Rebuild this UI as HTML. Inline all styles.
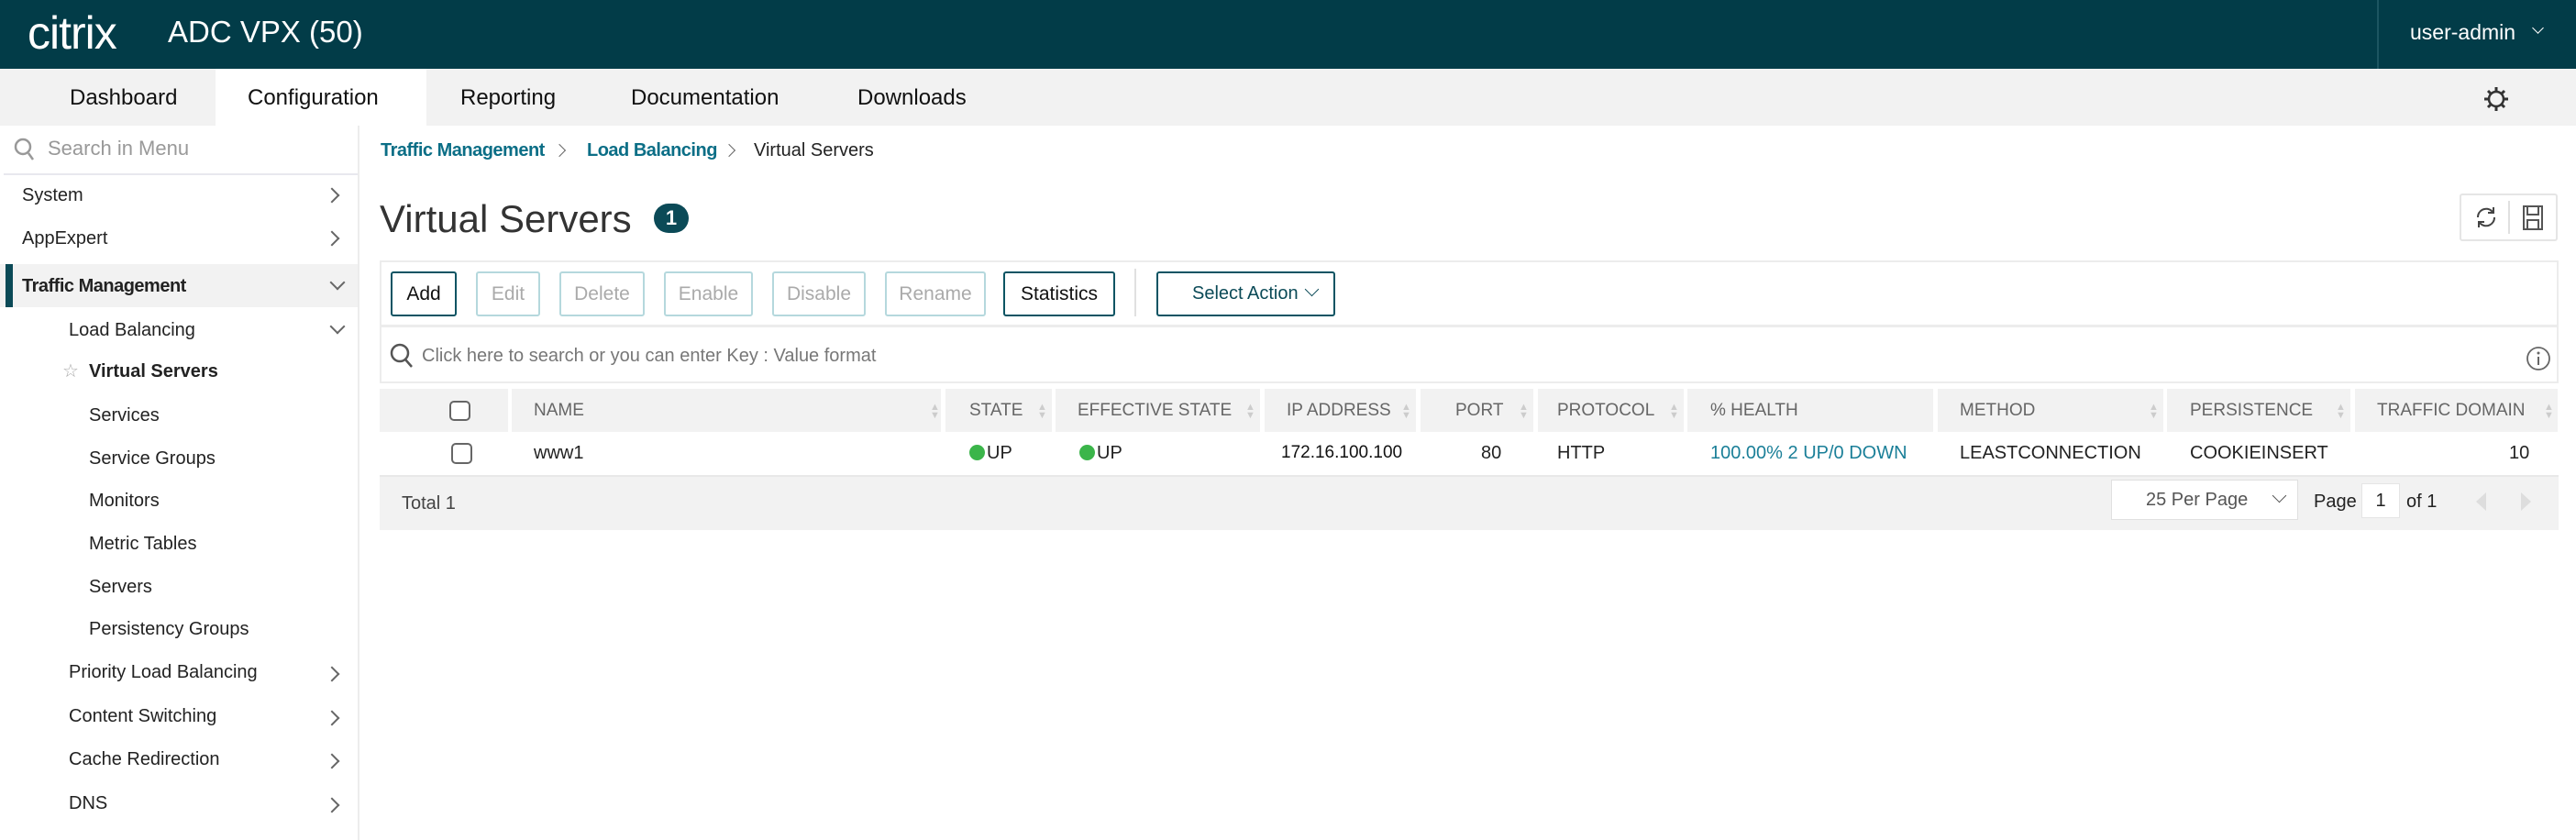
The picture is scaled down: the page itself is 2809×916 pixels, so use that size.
<!DOCTYPE html>
<html><head><meta charset="utf-8">
<style>
*{margin:0;padding:0;box-sizing:border-box}
body{width:2809px;height:916px;position:relative;overflow:hidden;background:#fff;font-family:"Liberation Sans",sans-serif;color:#222}
.a{position:absolute;white-space:nowrap}
.t{position:absolute;white-space:nowrap;font-size:20px;line-height:24px}
.chev{position:absolute;width:12px;height:12px;border-right:2px solid #666;border-bottom:2px solid #666}
.btn{position:absolute;top:296px;height:49px;border:2px solid #b5d8dd;border-radius:3px;color:#aaa;font-size:21px;line-height:45px;text-align:center}
.btn.on{border-color:#0c5463;color:#111}
.th{position:absolute;top:424px;height:47px;background:#f2f2f2;font-size:19px;line-height:47px;color:#666;padding-left:0}
.td{position:absolute;top:482px;font-size:20px;line-height:24px;color:#222}
.dot{display:inline-block;width:17px;height:17px;border-radius:50%;background:#3bb54a;vertical-align:-2px;margin-right:2px}
</style></head><body>
<!-- header -->
<div class="a" style="left:0;top:0;width:2809px;height:75px;background:#023c48"></div>
<div class="a" style="left:30px;top:8px;font-size:50px;line-height:56px;color:#fff;font-weight:300;letter-spacing:-1px">citrix</div>
<div class="a" style="left:183px;top:15px;font-size:33px;line-height:40px;color:#fff">ADC VPX (50)</div>
<div class="a" style="left:2592px;top:0;width:2px;height:75px;background:#1c5561"></div>
<div class="a" style="left:2628px;top:21px;font-size:23px;line-height:28px;color:#fff">user-admin</div>
<div class="chev" style="left:2763px;top:26px;width:9px;height:9px;border-color:#fff;border-width:0 1.5px 1.5px 0;transform:rotate(45deg)"></div>
<!-- nav -->
<div class="a" style="left:0;top:75px;width:2809px;height:62px;background:#f2f2f2"></div>
<div class="a" style="left:235px;top:75px;width:230px;height:63px;background:#fff"></div>
<div class="a" style="left:76px;top:93px;font-size:24px;line-height:28px;color:#111">Dashboard</div>
<div class="a" style="left:270px;top:93px;font-size:24px;line-height:28px;color:#111">Configuration</div>
<div class="a" style="left:502px;top:93px;font-size:24px;line-height:28px;color:#111">Reporting</div>
<div class="a" style="left:688px;top:93px;font-size:24px;line-height:28px;color:#111">Documentation</div>
<div class="a" style="left:935px;top:93px;font-size:24px;line-height:28px;color:#111">Downloads</div>
<svg class="a" style="left:2706px;top:92px" width="32" height="32" viewBox="0 0 32 32"><circle cx="16" cy="16" r="8" fill="none" stroke="#333" stroke-width="2.5"/><g stroke="#333" stroke-width="3"><line x1="16" y1="3" x2="16" y2="8"/><line x1="16" y1="24" x2="16" y2="29"/><line x1="3" y1="16" x2="8" y2="16"/><line x1="24" y1="16" x2="29" y2="16"/><line x1="7" y1="7" x2="10" y2="10"/><line x1="22" y1="22" x2="25" y2="25"/><line x1="7" y1="25" x2="10" y2="22"/><line x1="22" y1="10" x2="25" y2="7"/></g></svg>
<!-- sidebar -->
<div class="a" style="left:390px;top:137px;width:2px;height:779px;background:#ececec"></div>
<div class="a" style="left:4px;top:189px;width:386px;height:2px;background:#e8e8ee"></div>
<svg class="a" style="left:14px;top:149px" width="26" height="28" viewBox="0 0 26 28"><circle cx="11" cy="11" r="8" fill="none" stroke="#999" stroke-width="2.5"/><line x1="17" y1="18" x2="22" y2="25" stroke="#999" stroke-width="2.5"/></svg>
<div class="t" style="left:52px;top:150px;font-size:22px;color:#999">Search in Menu</div>
<div class="t" style="left:24px;top:201px;color:#222">System</div>
<div class="chev" style="left:356px;top:207px;transform:rotate(-45deg)"></div>
<div class="t" style="left:24px;top:248px;color:#222">AppExpert</div>
<div class="chev" style="left:356px;top:254px;transform:rotate(-45deg)"></div>
<div class="a" style="left:0;top:288px;width:390px;height:47px;background:#f2f2f2"></div>
<div class="a" style="left:6px;top:288px;width:8px;height:47px;background:#0b4a57"></div>
<div class="t" style="left:24px;top:300px;font-weight:bold;letter-spacing:-0.5px">Traffic Management</div>
<div class="chev" style="left:362px;top:302px;transform:rotate(45deg)"></div>
<div class="t" style="left:75px;top:348px">Load Balancing</div>
<div class="chev" style="left:362px;top:350px;transform:rotate(45deg)"></div>
<div class="a" style="left:68px;top:392px;font-size:20px;color:#aaa">☆</div>
<div class="t" style="left:97px;top:393px;font-weight:bold">Virtual Servers</div>
<div class="t" style="left:97px;top:441px">Services</div>
<div class="t" style="left:97px;top:488px">Service Groups</div>
<div class="t" style="left:97px;top:534px">Monitors</div>
<div class="t" style="left:97px;top:581px">Metric Tables</div>
<div class="t" style="left:97px;top:628px">Servers</div>
<div class="t" style="left:97px;top:674px">Persistency Groups</div>
<div class="t" style="left:75px;top:721px">Priority Load Balancing</div>
<div class="chev" style="left:356px;top:729px;transform:rotate(-45deg)"></div>
<div class="t" style="left:75px;top:769px">Content Switching</div>
<div class="chev" style="left:356px;top:777px;transform:rotate(-45deg)"></div>
<div class="t" style="left:75px;top:816px">Cache Redirection</div>
<div class="chev" style="left:356px;top:824px;transform:rotate(-45deg)"></div>
<div class="t" style="left:75px;top:864px">DNS</div>
<div class="chev" style="left:356px;top:872px;transform:rotate(-45deg)"></div>
<!-- breadcrumb -->
<div class="t" style="left:415px;top:152px;color:#0b6e86;font-weight:bold;letter-spacing:-0.5px">Traffic Management</div>
<div class="chev" style="left:605px;top:159px;width:10px;height:10px;transform:rotate(-45deg);border-width:0 1.5px 1.5px 0"></div>
<div class="t" style="left:640px;top:152px;color:#0b6e86;font-weight:bold;letter-spacing:-0.5px">Load Balancing</div>
<div class="chev" style="left:790px;top:159px;width:10px;height:10px;transform:rotate(-45deg);border-width:0 1.5px 1.5px 0"></div>
<div class="t" style="left:822px;top:152px;color:#222">Virtual Servers</div>
<!-- title -->
<div class="a" style="left:414px;top:214px;font-size:42px;line-height:50px;color:#333">Virtual Servers</div>
<div class="a" style="left:713px;top:222px;width:38px;height:32px;border-radius:16px;background:#0b4a57;color:#fff;font-size:22px;line-height:32px;text-align:center;font-weight:bold">1</div>
<div class="a" style="left:2682px;top:211px;width:107px;height:52px;border:2px solid #e5e5e5;border-radius:3px"></div>
<div class="a" style="left:2735px;top:219px;width:2px;height:36px;background:#e0e0e0"></div>
<svg class="a" style="left:2694px;top:220px" width="34" height="34" viewBox="0 0 34 34"><path d="M8 17a9 9 0 0 1 15-7l2 2M26 17a9 9 0 0 1-15 7l-2-2" fill="none" stroke="#444" stroke-width="2"/><path d="M25 6v6h-6M9 28v-6h6" fill="none" stroke="#444" stroke-width="2"/></svg>
<svg class="a" style="left:2745px;top:220px" width="34" height="34" viewBox="0 0 34 34"><rect x="7" y="5" width="20" height="25" fill="none" stroke="#555" stroke-width="2"/><rect x="11" y="5" width="12" height="9" fill="none" stroke="#555" stroke-width="2"/><rect x="11" y="20" width="12" height="10" fill="none" stroke="#555" stroke-width="2"/></svg>
<!-- toolbar -->
<div class="a" style="left:414px;top:284px;width:2376px;height:73px;border:2px solid #ececec;border-bottom-width:3px"></div>
<div class="btn on" style="left:426px;width:72px">Add</div>
<div class="btn" style="left:519px;width:70px">Edit</div>
<div class="btn" style="left:610px;width:93px">Delete</div>
<div class="btn" style="left:724px;width:97px">Enable</div>
<div class="btn" style="left:842px;width:102px">Disable</div>
<div class="btn" style="left:965px;width:110px">Rename</div>
<div class="btn on" style="left:1094px;width:122px">Statistics</div>
<div class="a" style="left:1237px;top:293px;width:2px;height:52px;background:#e0e0e0"></div>
<div class="btn on" style="left:1261px;width:195px;color:#0b4a57;text-align:left;padding-left:37px;font-size:20px">Select Action</div>
<div class="chev" style="left:1425px;top:310px;width:11px;height:11px;border-color:#0b4a57;border-width:0 1.5px 1.5px 0;transform:rotate(45deg)"></div>
<!-- search -->
<div class="a" style="left:414px;top:357px;width:2376px;height:61px;border:2px solid #ececec;border-top:none"></div>
<svg class="a" style="left:424px;top:373px" width="28" height="30" viewBox="0 0 28 30"><circle cx="12" cy="12" r="9" fill="none" stroke="#555" stroke-width="2.5"/><line x1="18" y1="19" x2="25" y2="27" stroke="#555" stroke-width="2.5"/></svg>
<div class="t" style="left:460px;top:376px;color:#777">Click here to search or you can enter Key : Value format</div>
<svg class="a" style="left:2753px;top:376px" width="30" height="30" viewBox="0 0 30 30"><circle cx="15" cy="15" r="12" fill="none" stroke="#666" stroke-width="1.8"/><circle cx="15" cy="9" r="1.5" fill="#666"/><line x1="15" y1="13" x2="15" y2="22" stroke="#666" stroke-width="2"/></svg>
<!-- table header -->
<div class="th" style="left:414px;width:140px"></div>
<div class="a" style="left:490px;top:437px;width:23px;height:22px;border:2px solid #666;border-radius:5px;background:#fff"></div>
<div class="th" style="left:558px;width:468px"><span style="position:absolute;left:24px">NAME</span></div>
<div class="th" style="left:1031px;width:116px"><span style="position:absolute;left:26px">STATE</span></div>
<div class="th" style="left:1151px;width:223px"><span style="position:absolute;left:24px">EFFECTIVE STATE</span></div>
<div class="th" style="left:1379px;width:165px"><span style="position:absolute;left:24px">IP ADDRESS</span></div>
<div class="th" style="left:1549px;width:123px"><span style="position:absolute;left:38px">PORT</span></div>
<div class="th" style="left:1677px;width:159px"><span style="position:absolute;left:21px">PROTOCOL</span></div>
<div class="th" style="left:1840px;width:268px"><span style="position:absolute;left:25px">% HEALTH</span></div>
<div class="th" style="left:2113px;width:246px"><span style="position:absolute;left:24px">METHOD</span></div>
<div class="th" style="left:2363px;width:200px"><span style="position:absolute;left:25px">PERSISTENCE</span></div>
<div class="th" style="left:2568px;width:221px"><span style="position:absolute;left:24px">TRAFFIC DOMAIN</span></div>
<div style="color:#ccc;font-size:11px;line-height:9px">
<div class="a" style="left:1014px;top:440px">▲<br>▼</div>
<div class="a" style="left:1131px;top:440px">▲<br>▼</div>
<div class="a" style="left:1358px;top:440px">▲<br>▼</div>
<div class="a" style="left:1528px;top:440px">▲<br>▼</div>
<div class="a" style="left:1656px;top:440px">▲<br>▼</div>
<div class="a" style="left:1820px;top:440px">▲<br>▼</div>
<div class="a" style="left:2343px;top:440px">▲<br>▼</div>
<div class="a" style="left:2547px;top:440px">▲<br>▼</div>
<div class="a" style="left:2774px;top:440px">▲<br>▼</div>
</div>
<!-- row -->
<div class="a" style="left:492px;top:483px;width:23px;height:23px;border:2px solid #666;border-radius:5px"></div>
<div class="td" style="left:582px">www1</div>
<div class="td" style="left:1057px"><span class="dot"></span>UP</div>
<div class="td" style="left:1177px"><span class="dot"></span>UP</div>
<div class="td" style="left:1397px;font-size:19px;color:#111">172.16.100.100</div>
<div class="td" style="left:1615px">80</div>
<div class="td" style="left:1698px">HTTP</div>
<div class="td" style="left:1865px;color:#1a7f98">100.00% 2 UP/0 DOWN</div>
<div class="td" style="left:2137px">LEASTCONNECTION</div>
<div class="td" style="left:2388px">COOKIEINSERT</div>
<div class="td" style="left:2736px">10</div>
<div class="a" style="left:414px;top:518px;width:2376px;height:2px;background:#e8e8e8"></div>
<!-- footer -->
<div class="a" style="left:414px;top:520px;width:2376px;height:58px;background:#f2f2f2"></div>
<div class="t" style="left:438px;top:537px;color:#444">Total 1</div>
<div class="a" style="left:2302px;top:523px;width:204px;height:44px;background:#fff;border:1px solid #e0e0e0"></div>
<div class="t" style="left:2340px;top:533px;color:#555">25 Per Page</div>
<div class="chev" style="left:2480px;top:535px;width:11px;height:11px;border-color:#555;border-width:0 1.5px 1.5px 0;transform:rotate(45deg)"></div>
<div class="t" style="left:2523px;top:535px;color:#222">Page</div>
<div class="a" style="left:2575px;top:527px;width:42px;height:38px;background:#fff;border:1px solid #e5e5e5;font-size:20px;line-height:36px;text-align:center">1</div>
<div class="t" style="left:2624px;top:535px;color:#222">of 1</div>
<div class="a" style="left:2700px;top:537px;width:0;height:0;border-top:10px solid transparent;border-bottom:10px solid transparent;border-right:11px solid #ddd"></div>
<div class="a" style="left:2749px;top:537px;width:0;height:0;border-top:10px solid transparent;border-bottom:10px solid transparent;border-left:11px solid #ddd"></div>
</body></html>
